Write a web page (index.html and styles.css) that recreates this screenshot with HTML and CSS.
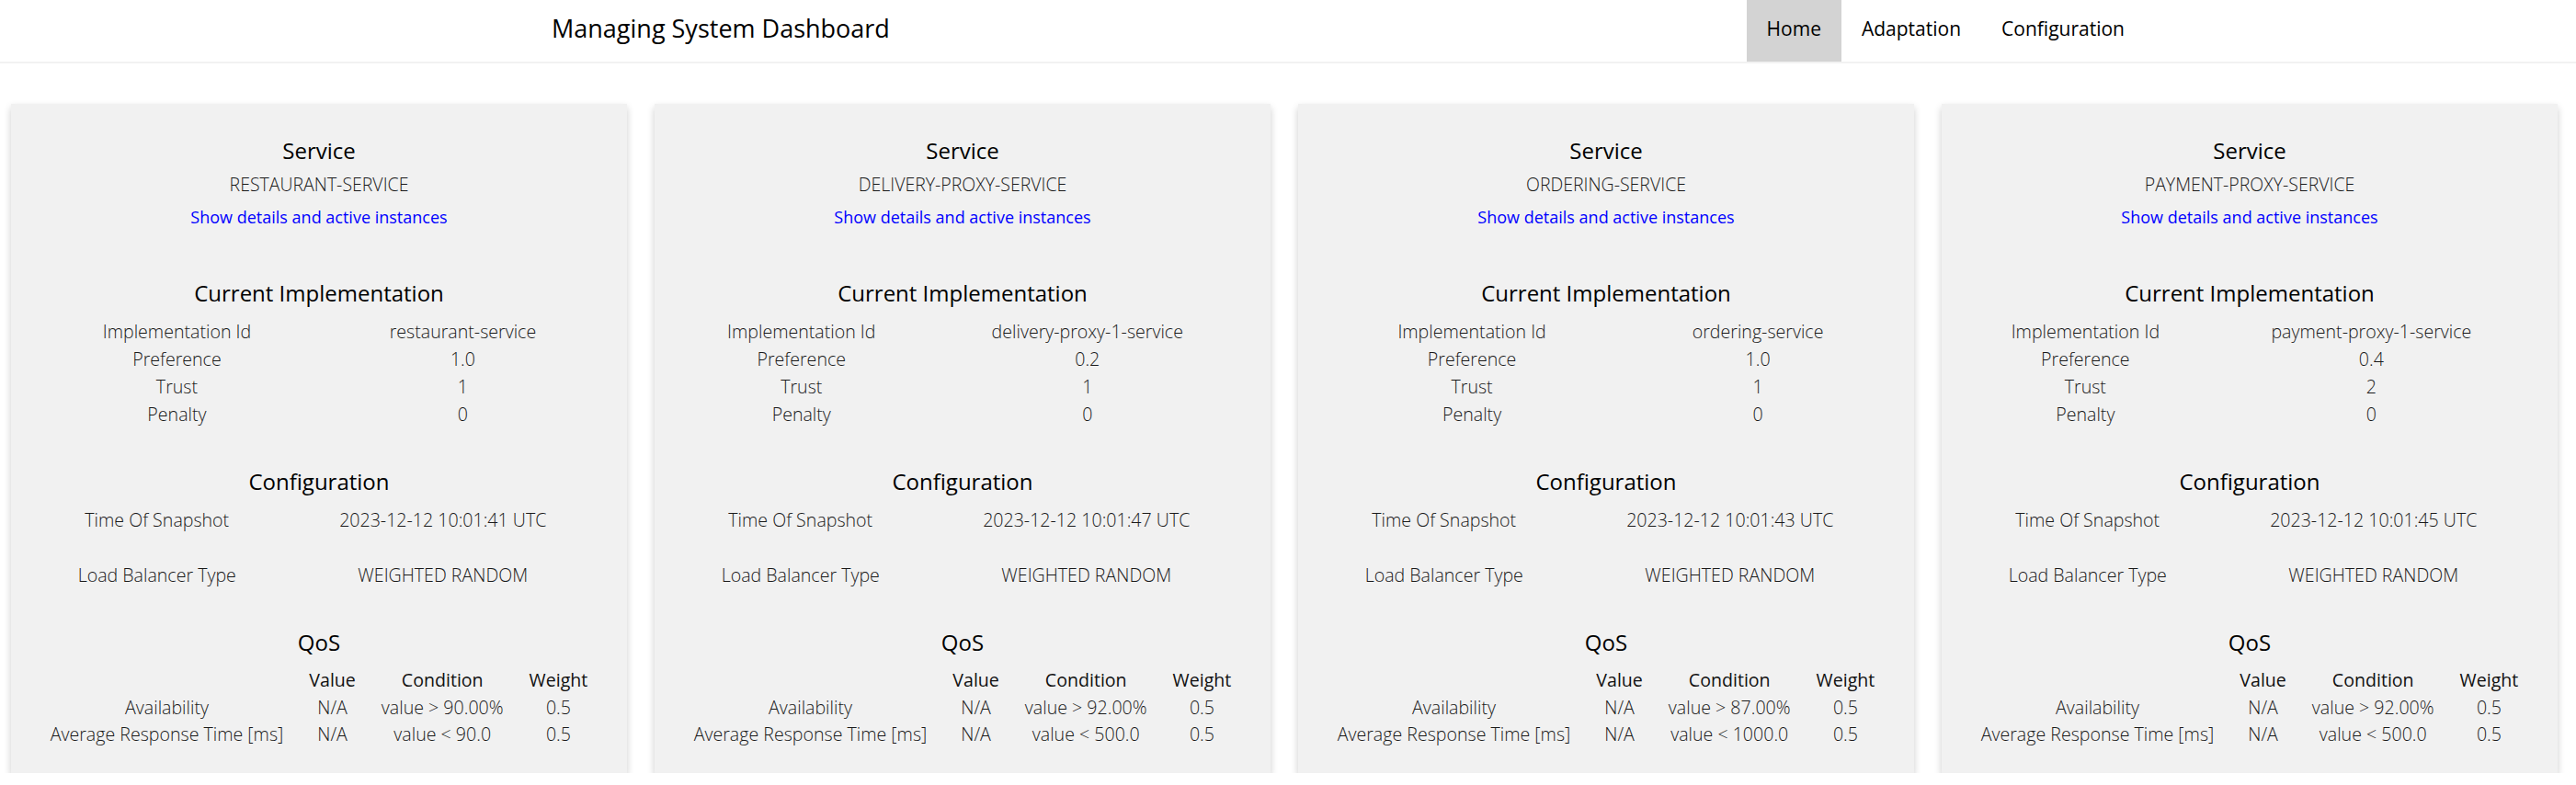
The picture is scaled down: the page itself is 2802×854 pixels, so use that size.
FILE: index.html
```html
<!DOCTYPE html>
<html lang="en">
<head>
<meta charset="utf-8">
<title>Managing System Dashboard</title>
<link rel="stylesheet" href="styles.css">
</head>
<body>
<header class="topbar">
  <h1 class="brand">Managing System Dashboard</h1>
  <nav class="menu">
    <a class="menu-item active" href="#">Home</a>
    <a class="menu-item" href="#">Adaptation</a>
    <a class="menu-item" href="#">Configuration</a>
  </nav>
</header>
<main class="cards">
  <section class="card">
    <h2 class="card-title">Service</h2>
    <p class="svc-name">RESTAURANT-SERVICE</p>
    <a class="details" href="#">Show details and active instances</a>
    <h2 class="card-title section">Current Implementation</h2>
    <table class="kv">
      <tr><td>Implementation Id</td><td>restaurant-service</td></tr>
      <tr><td>Preference</td><td>1.0</td></tr>
      <tr><td>Trust</td><td>1</td></tr>
      <tr><td>Penalty</td><td>0</td></tr>
    </table>
    <h2 class="card-title section">Configuration</h2>
    <table class="kv">
      <tr class="spaced"><td>Time Of Snapshot</td><td>2023-12-12 10:01:41 UTC</td></tr>
      <tr><td>Load Balancer Type</td><td>WEIGHTED RANDOM</td></tr>
    </table>
    <h2 class="card-title section">QoS</h2>
    <table class="qos">
      <tr><th></th><th>Value</th><th>Condition</th><th>Weight</th></tr>
      <tr><td>Availability</td><td>N/A</td><td>value &gt; 90.00%</td><td>0.5</td></tr>
      <tr><td>Average Response Time [ms]</td><td>N/A</td><td>value &lt; 90.0</td><td>0.5</td></tr>
    </table>
  </section>
  <section class="card">
    <h2 class="card-title">Service</h2>
    <p class="svc-name">DELIVERY-PROXY-SERVICE</p>
    <a class="details" href="#">Show details and active instances</a>
    <h2 class="card-title section">Current Implementation</h2>
    <table class="kv">
      <tr><td>Implementation Id</td><td>delivery-proxy-1-service</td></tr>
      <tr><td>Preference</td><td>0.2</td></tr>
      <tr><td>Trust</td><td>1</td></tr>
      <tr><td>Penalty</td><td>0</td></tr>
    </table>
    <h2 class="card-title section">Configuration</h2>
    <table class="kv">
      <tr class="spaced"><td>Time Of Snapshot</td><td>2023-12-12 10:01:47 UTC</td></tr>
      <tr><td>Load Balancer Type</td><td>WEIGHTED RANDOM</td></tr>
    </table>
    <h2 class="card-title section">QoS</h2>
    <table class="qos">
      <tr><th></th><th>Value</th><th>Condition</th><th>Weight</th></tr>
      <tr><td>Availability</td><td>N/A</td><td>value &gt; 92.00%</td><td>0.5</td></tr>
      <tr><td>Average Response Time [ms]</td><td>N/A</td><td>value &lt; 500.0</td><td>0.5</td></tr>
    </table>
  </section>
  <section class="card">
    <h2 class="card-title">Service</h2>
    <p class="svc-name">ORDERING-SERVICE</p>
    <a class="details" href="#">Show details and active instances</a>
    <h2 class="card-title section">Current Implementation</h2>
    <table class="kv">
      <tr><td>Implementation Id</td><td>ordering-service</td></tr>
      <tr><td>Preference</td><td>1.0</td></tr>
      <tr><td>Trust</td><td>1</td></tr>
      <tr><td>Penalty</td><td>0</td></tr>
    </table>
    <h2 class="card-title section">Configuration</h2>
    <table class="kv">
      <tr class="spaced"><td>Time Of Snapshot</td><td>2023-12-12 10:01:43 UTC</td></tr>
      <tr><td>Load Balancer Type</td><td>WEIGHTED RANDOM</td></tr>
    </table>
    <h2 class="card-title section">QoS</h2>
    <table class="qos">
      <tr><th></th><th>Value</th><th>Condition</th><th>Weight</th></tr>
      <tr><td>Availability</td><td>N/A</td><td>value &gt; 87.00%</td><td>0.5</td></tr>
      <tr><td>Average Response Time [ms]</td><td>N/A</td><td>value &lt; 1000.0</td><td>0.5</td></tr>
    </table>
  </section>
  <section class="card">
    <h2 class="card-title">Service</h2>
    <p class="svc-name">PAYMENT-PROXY-SERVICE</p>
    <a class="details" href="#">Show details and active instances</a>
    <h2 class="card-title section">Current Implementation</h2>
    <table class="kv">
      <tr><td>Implementation Id</td><td>payment-proxy-1-service</td></tr>
      <tr><td>Preference</td><td>0.4</td></tr>
      <tr><td>Trust</td><td>2</td></tr>
      <tr><td>Penalty</td><td>0</td></tr>
    </table>
    <h2 class="card-title section">Configuration</h2>
    <table class="kv">
      <tr class="spaced"><td>Time Of Snapshot</td><td>2023-12-12 10:01:45 UTC</td></tr>
      <tr><td>Load Balancer Type</td><td>WEIGHTED RANDOM</td></tr>
    </table>
    <h2 class="card-title section">QoS</h2>
    <table class="qos">
      <tr><th></th><th>Value</th><th>Condition</th><th>Weight</th></tr>
      <tr><td>Availability</td><td>N/A</td><td>value &gt; 92.00%</td><td>0.5</td></tr>
      <tr><td>Average Response Time [ms]</td><td>N/A</td><td>value &lt; 500.0</td><td>0.5</td></tr>
    </table>
  </section>
</main>
</body>
</html>
```

FILE: styles.css
```css
* { box-sizing: border-box; }

html, body {
  margin: 0;
  padding: 0;
  background: #ffffff;
}

body {
  font-family: "Open Sans", "Noto Sans", "Liberation Sans", sans-serif;
  color: #222222;
}

.topbar {
  display: flex;
  align-items: stretch;
  height: 69px;
  padding: 0 469px 0 600px;
  border-bottom: 2px solid #f2f2f2;
}

.brand {
  margin: 0;
  display: flex;
  align-items: center;
  padding-bottom: 6px;
  font-size: 27px;
  font-weight: 400;
  color: #000000;
}

.menu {
  display: flex;
  margin-left: auto;
}

.menu-item {
  display: flex;
  align-items: center;
  padding: 0 22px 6px;
  font-size: 21px;
  font-weight: 400;
  color: #000000;
  text-decoration: none;
}

.menu-item.active {
  background: #d3d3d3;
}

.cards {
  display: flex;
  gap: 30px;
  padding: 0 20px 0 12px;
  margin-top: 44px;
}

.card {
  flex: 1 1 0;
  min-width: 0;
  background: #f1f1f1;
  box-shadow: 0 4px 8px 0 rgba(0, 0, 0, 0.2);
  padding: 35px 24px 28px;
  text-align: center;
}

.card-title {
  margin: 0;
  font-size: 24px;
  line-height: 32px;
  font-weight: 400;
  color: #000000;
}

.card-title.section {
  margin-top: 42px;
}

.svc-name {
  margin: 6px 0 0;
  font-size: 19.5px;
  line-height: 30px;
  font-weight: 300;
  color: #1a1a1a;
}

.details {
  display: block;
  margin-top: 5px;
  font-size: 18px;
  line-height: 30px;
  color: #0000ff;
  text-decoration: none;
}

.details + .card-title.section {
  margin-top: 52px;
}

.kv {
  width: 100%;
  border-collapse: collapse;
  margin-top: 11px;
}

.kv td {
  padding: 0;
  font-size: 19.6px;
  line-height: 30px;
  font-weight: 300;
  color: #1a1a1a;
  text-align: center;
}

.kv .spaced td {
  padding-bottom: 30px;
}

.kv + .card-title.section {
  margin-top: 42px;
}

.qos {
  margin: 10px auto 0;
  border-collapse: collapse;
}

.qos th,
.qos td {
  padding: 0 14px;
  font-size: 19.6px;
  line-height: 29px;
  text-align: center;
  white-space: nowrap;
}

.qos th {
  font-weight: 400;
  color: #111111;
  line-height: 30px;
}

.qos td {
  font-weight: 300;
  color: #1a1a1a;
}
```
